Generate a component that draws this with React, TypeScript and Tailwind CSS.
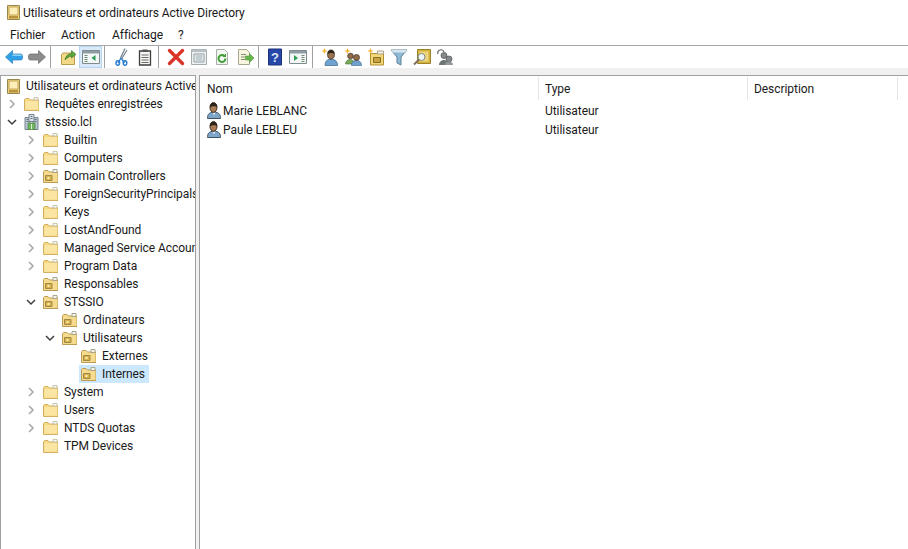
import type { ReactNode } from "react";

function Folder() {
  return (
    <svg width="15" height="14" viewBox="0 0 15 14" className="shrink-0">
      <path d="M.5 13.500V2.500l1-1h3.500l1.500 1.500h8.500v10.500z" fill="#f8d981" stroke="#d2b063" />
      <path d="M10 .5h4v2.500h-4z" fill="#fbfaf2" stroke="#c8c3ad" />
      <path d="M1.500 4h12.500v8.500H1.500z" fill="#fbe5a3" />
    </svg>
  );
}

function OuFolder() {
  return (
    <svg width="15" height="14" viewBox="0 0 15 14" className="shrink-0">
      <path d="M.5 13.500V2.500l1-1h3.500l1.500 1.500h8.500v10.500z" fill="#f6db8e" stroke="#bb9c52" />
      <path d="M10 .5h4v3h-4z" fill="#f7f5ea" stroke="#a9a48f" />
      <path d="M2.500 6.500h6.500v5H2.500z" fill="#d8b04a" stroke="#a08a45" />
      <path d="M4.500 8h2v2h-2z" fill="#fff0b8" />
    </svg>
  );
}

function Domain() {
  return (
    <svg width="15" height="16" viewBox="0 0 15 16" className="shrink-0">
      <path d="M1 3.500h5v12H1z" fill="#b9c6d0" stroke="#75838e" />
      <path d="M9 3.500h5v12H9z" fill="#b9c6d0" stroke="#75838e" />
      <path d="M5 .5h5v7H5z" fill="#d9e2e8" stroke="#75838e" />
      <path d="M2.500 5.500h2M2.500 7.500h2M10.500 5.500h2M10.500 7.500h2M6.500 2.500h2M6.500 4.500h2" stroke="#5d7180" />
      <path d="M4 9h7v6.500H4z" fill="#6fb35f" stroke="#4f8144" strokeWidth=".7" />
      <path d="M7.500 10v5" stroke="#d8efcf" />
    </svg>
  );
}

function RootIcon() {
  return (
    <svg width="13" height="15" viewBox="0 0 13 15" className="shrink-0">
      <path d="M.5.5h12v14H.5z" fill="#f0d27e" stroke="#98864f" />
      <path d="M2 2h9v8H2z" fill="#fbeeb9" stroke="#c5a75a" />
      <path d="M2 11h9v2.500H2z" fill="#b8933c" />
    </svg>
  );
}

function UserIcon() {
  return (
    <svg width="14" height="17" viewBox="0 0 14 17" className="shrink-0">
      <path d="M.5 16.500c0-3 .5-6 6.500-6.500 6 .5 6.500 3.500 6.500 6.500z" fill="#7fa6c9" stroke="#3f5266" />
      <path d="M5.500 10.500l1.500 3 1.500-3z" fill="#dfe9f1" />
      <ellipse cx="6.500" cy="5.500" rx="3.500" ry="4.800" fill="#a97c55" stroke="#3d2d1e" />
      <path d="M3 5.500C2.500 2 4.500.5 6.500.5S10.500 2 10 5.500C9 3.800 5 3.800 3 5.500z" fill="#2e241b" />
    </svg>
  );
}

function Chevron({ open }: { open?: boolean }) {
  return open ? (
    <svg width="10" height="7" viewBox="0 0 10 7">
      <path d="M1 1l4 4 4-4" fill="none" stroke="#3f3f3f" strokeWidth="1.500" />
    </svg>
  ) : (
    <svg width="7" height="10" viewBox="0 0 7 10">
      <path d="M1 1l4 4-4 4" fill="none" stroke="#a6a6a6" strokeWidth="1.500" />
    </svg>
  );
}

type TreeRow = {
  label: string;
  depth: number;
  icon: ReactNode;
  arrow?: "open" | "closed";
  selected?: boolean;
};

const rows: TreeRow[] = [
  { label: "Requêtes enregistrées", depth: 0, icon: <Folder />, arrow: "closed" },
  { label: "stssio.lcl", depth: 0, icon: <Domain />, arrow: "open" },
  { label: "Builtin", depth: 1, icon: <Folder />, arrow: "closed" },
  { label: "Computers", depth: 1, icon: <Folder />, arrow: "closed" },
  { label: "Domain Controllers", depth: 1, icon: <OuFolder />, arrow: "closed" },
  { label: "ForeignSecurityPrincipals", depth: 1, icon: <Folder />, arrow: "closed" },
  { label: "Keys", depth: 1, icon: <Folder />, arrow: "closed" },
  { label: "LostAndFound", depth: 1, icon: <Folder />, arrow: "closed" },
  { label: "Managed Service Accounts", depth: 1, icon: <Folder />, arrow: "closed" },
  { label: "Program Data", depth: 1, icon: <Folder />, arrow: "closed" },
  { label: "Responsables", depth: 1, icon: <OuFolder /> },
  { label: "STSSIO", depth: 1, icon: <OuFolder />, arrow: "open" },
  { label: "Ordinateurs", depth: 2, icon: <OuFolder /> },
  { label: "Utilisateurs", depth: 2, icon: <OuFolder />, arrow: "open" },
  { label: "Externes", depth: 3, icon: <OuFolder /> },
  { label: "Internes", depth: 3, icon: <OuFolder />, selected: true },
  { label: "System", depth: 1, icon: <Folder />, arrow: "closed" },
  { label: "Users", depth: 1, icon: <Folder />, arrow: "closed" },
  { label: "NTDS Quotas", depth: 1, icon: <Folder />, arrow: "closed" },
  { label: "TPM Devices", depth: 1, icon: <Folder /> },
];

const depthPad = ["pl-[5px]", "pl-[24px]", "pl-[43px]", "pl-[62px]"];

function ToolBtn({ children, active }: { children: ReactNode; active?: boolean }) {
  return (
    <div
      className={
        "flex h-[22px] w-[23px] items-center justify-center border " +
        (active ? "border-[#b5d7f3] bg-[#d8eafa]" : "border-transparent")
      }
    >
      {children}
    </div>
  );
}

function Sep({ className }: { className: string }) {
  return (
    <div className={"flex h-[22px] " + className}>
      <div className="h-full w-px bg-[#a0a0a0]" />
    </div>
  );
}

function Glyph({ children }: { children: ReactNode }) {
  return (
    <svg width="18" height="18" viewBox="0 0 18 18">
      {children}
    </svg>
  );
}

const star = "M3.500 0l.9 2.200 2.300.8-2.300.8-.9 2.200-.9-2.200L.3 3l2.300-.8z";

function Toolbar() {
  return (
    <div className="flex h-[22px] items-center pl-[2px]">
      <ToolBtn>
        <Glyph>
          <path d="M.5 9l7-6.500V6h8a2 2 0 0 1 2 2v2a2 2 0 0 1-2 2h-8v3.500z" fill="#2f9fe6" stroke="#2a7fc0" strokeWidth=".7" />
          <path d="M7.500 6.500h8a1.500 1.500 0 0 1 1.500 1.500H7.500z" fill="#8fd0f5" />
        </Glyph>
      </ToolBtn>
      <ToolBtn>
        <Glyph>
          <path d="M17.500 9l-7-6.500V6h-8a2 2 0 0 0-2 2v2a2 2 0 0 0 2 2h8v3.500z" fill="#8c8c8c" stroke="#6c6c6c" strokeWidth=".7" />
        </Glyph>
      </ToolBtn>
      <Sep className="w-2 pl-[2px]" />
      <ToolBtn>
        <Glyph>
          <path d="M2.500 16.500V6.500l1.500-1.500h11.500v11.500z" fill="#f2d987" stroke="#bb9c4c" />
          <path d="M6 12c.5-4 3-6 6.500-6.500V2.500L17 6.500l-4.500 3.500V8C10 8.500 8 10 6 12z" fill="#5aa83e" stroke="#387026" strokeWidth=".6" />
        </Glyph>
      </ToolBtn>
      <ToolBtn active>
        <Glyph>
          <path d="M.5 2.500h17v13H.5z" fill="#f4f7f8" stroke="#7f8c8d" />
          <path d="M1 3h16v2.500H1z" fill="#8f9ca3" />
          <path d="M2.500 7.500h3M2.500 9.500h3M2.500 11.500h3M2.500 13.500h3" stroke="#6f8a6f" />
          <path d="M13.500 7v6l-4-3z" fill="#2f9e4f" />
        </Glyph>
      </ToolBtn>
      <Sep className="w-2 pl-[2px]" />
      <ToolBtn>
        <Glyph>
          <path d="M12 .5L7.500 10M14 2L8.500 11" stroke="#7a8794" strokeWidth="1.300" fill="none" />
          <path d="M8 10L5 15M8.500 10.500L11.500 15" stroke="#2b7fd0" strokeWidth="1.400" fill="none" />
          <ellipse cx="4.800" cy="15" rx="1.800" ry="2.300" fill="none" stroke="#2b7fd0" strokeWidth="1.500" />
          <ellipse cx="12" cy="15" rx="1.800" ry="2.300" fill="none" stroke="#2b7fd0" strokeWidth="1.500" />
        </Glyph>
      </ToolBtn>
      <ToolBtn>
        <Glyph>
          <path d="M3.500 3h11v14h-11z" fill="#f6f6f2" stroke="#3d3d3d" strokeWidth="1.300" />
          <path d="M6.500 1.500h5V4h-5z" fill="#555" />
          <path d="M5.500 7h7M5.500 9.500h7M5.500 12h7M5.500 14.500h7" stroke="#6b6b6b" />
        </Glyph>
      </ToolBtn>
      <Sep className="w-2 pl-[2px]" />
      <ToolBtn>
        <Glyph>
          <path d="M2.500 2.500l13 13M15.500 2.500l-13 13" stroke="#d9352b" strokeWidth="3.400" strokeLinecap="round" />
        </Glyph>
      </ToolBtn>
      <ToolBtn>
        <Glyph>
          <path d="M1.500 1.500h15v15h-15z" fill="#eef1f1" stroke="#a4acac" />
          <path d="M1.500 1.500h15v2.500h-15z" fill="#b9c2c4" />
          <path d="M4 6h10v8H4z" fill="#fbfbfb" stroke="#8b9aa0" />
          <path d="M5.500 8h7M5.500 10h7M5.500 12h7" stroke="#8ba0aa" />
        </Glyph>
      </ToolBtn>
      <ToolBtn>
        <Glyph>
          <path d="M3.500 1.500h8l3 3v12h-11z" fill="#f4f7f2" stroke="#a8aea8" />
          <path d="M12.500 10.500a3.500 3.500 0 1 1-1-2.500" fill="none" stroke="#3f9e36" strokeWidth="2" />
          <path d="M13 5.500V9H9.500z" fill="#3f9e36" />
        </Glyph>
      </ToolBtn>
      <ToolBtn>
        <Glyph>
          <path d="M2.500 1.500h8l3 3v12h-11z" fill="#f7f5df" stroke="#a8a88e" />
          <path d="M5 6.500h5M5 9h4M5 11.500h4" stroke="#8c8c6c" />
          <path d="M9.500 8h4V5.500L18 10l-4.500 4.500V12h-4z" fill="#67b64a" stroke="#458a30" strokeWidth=".5" />
        </Glyph>
      </ToolBtn>
      <Sep className="w-[7px] pl-[2px]" />
      <ToolBtn>
        <Glyph>
          <path d="M2.500 1h13v16h-13z" fill="#2747a8" stroke="#1c327a" />
          <text x="9" y="14" textAnchor="middle" fontSize="13" fontWeight="700" fill="#dfe6fa" fontFamily="Liberation Sans, sans-serif">?</text>
        </Glyph>
      </ToolBtn>
      <ToolBtn>
        <Glyph>
          <path d="M.5 2.500h17v13H.5z" fill="#f4f7f8" stroke="#7f8c8d" />
          <path d="M1 3h16v2.500H1z" fill="#8f9ca3" />
          <path d="M12.500 7.500h3M12.500 9.500h3M12.500 11.500h3M12.500 13.500h3" stroke="#6f8a6f" />
          <path d="M5 7v6l4-3z" fill="#2f9e4f" />
        </Glyph>
      </ToolBtn>
      <Sep className="w-[9px] pl-[3px]" />
      <ToolBtn>
        <Glyph>
          <path d="M4 17.500c0-4.500 2-6 6-6.500 4 .5 6.500 2 6.500 6.500z" fill="#6ea3cf" stroke="#3b6488" strokeWidth=".7" />
          <ellipse cx="10" cy="6.500" rx="3.400" ry="4.500" fill="#9c7350" stroke="#3d2d1e" strokeWidth=".8" />
          <path d="M6.800 6C6.500 3 8 2 10 2s3.500 1 3.200 4C12 4.800 8.500 4.800 6.800 6z" fill="#2e241b" />
          <path d={star} fill="#f5b52e" />
        </Glyph>
      </ToolBtn>
      <ToolBtn>
        <Glyph>
          <path d="M1.500 16c0-3 2-4.500 4.500-4.500S10.500 13 10.500 16z" fill="#79a85a" stroke="#4e7236" strokeWidth=".6" />
          <path d="M7.500 17.500c0-3.500 2-5 5-5s5 1.500 5 5z" fill="#6ea3cf" stroke="#3b6488" strokeWidth=".6" />
          <circle cx="6.500" cy="8" r="2.800" fill="#8f6b4a" stroke="#3d2d1e" strokeWidth=".7" />
          <circle cx="12.500" cy="9.500" r="3" fill="#8f6b4a" stroke="#3d2d1e" strokeWidth=".7" />
          <path d={star} fill="#f5b52e" />
        </Glyph>
      </ToolBtn>
      <ToolBtn>
        <Glyph>
          <path d="M3.500 17V5.500h13V17z" fill="#f3d675" stroke="#b08f35" />
          <path d="M10.500 3h6v3h-6z" fill="#f4f1e4" stroke="#a9a48f" />
          <path d="M6.500 9.500h7v5h-7z" fill="#c9a13f" stroke="#866e2d" />
          <path d={star} fill="#f5b52e" />
        </Glyph>
      </ToolBtn>
      <ToolBtn>
        <Glyph>
          <path d="M1 2h16l-6 7v8l-4-2V9z" fill="#8fb9d4" stroke="#5f8196" />
          <path d="M1 2h16l-2 2.500H3z" fill="#d5e6f0" />
        </Glyph>
      </ToolBtn>
      <ToolBtn>
        <Glyph>
          <path d="M4.500 1.500h13v14h-13z" fill="#d4b23e" stroke="#9c8228" />
          <path d="M6.500 3.500h9v10h-9z" fill="#ecd67d" />
          <circle cx="8.500" cy="9" r="3.500" fill="#eef4f4" stroke="#7d8a8a" />
          <path d="M6 11.500L1 16.500" stroke="#7d7060" strokeWidth="2" />
        </Glyph>
      </ToolBtn>
      <ToolBtn>
        <Glyph>
          <path d="M2 6a3 3 0 0 1 6-2" fill="none" stroke="#666" strokeWidth="1.200" />
          <circle cx="8" cy="7.500" r="3" fill="#85898a" stroke="#505354" strokeWidth=".7" />
          <circle cx="13" cy="11" r="3" fill="#85898a" stroke="#505354" strokeWidth=".7" />
          <path d="M3 17c0-3 2.500-5 5-5s4 1.500 4 5z" fill="#6f7475" />
          <path d="M9 17c0-2.500 2-3.500 4-3.500s4 1 4 3.500z" fill="#93989a" />
        </Glyph>
      </ToolBtn>
    </div>
  );
}

function TreeLine({ row }: { row: TreeRow }) {
  return (
    <div className={"flex h-[18px] items-center " + depthPad[row.depth]}>
      <div className="flex w-[12px] shrink-0 items-center justify-center">
        {row.arrow && <Chevron open={row.arrow === "open"} />}
      </div>
      <div className={"ml-[4px] flex h-[18px] shrink-0 items-center pl-[2px] pr-[4px] " + (row.selected ? "bg-[#cce8ff]" : "")}>
        <div className="flex w-[15px] shrink-0 items-center justify-center">{row.icon}</div>
        <span className="ml-[6px] whitespace-nowrap">{row.label}</span>
      </div>
    </div>
  );
}

export default function App() {
  return (
    <div className="flex h-[549px] w-[908px] flex-col overflow-hidden bg-white font-['Roboto',sans-serif] text-[12px] leading-[18px] tracking-[-0.06px] text-[#1a1a1a]">
      <div className="flex h-[25px] items-center gap-[3px] pl-[7px]">
        <RootIcon />
        <span>Utilisateurs et ordinateurs Active Directory</span>
      </div>
      <div className="flex h-[20px] items-center pl-[10px]">
        <span className="w-[51px]">Fichier</span>
        <span className="w-[51px]">Action</span>
        <span className="w-[66px]">Affichage</span>
        <span>?</span>
      </div>
      <div className="h-px bg-[#a8a8a8]" />
      <Toolbar />
      <div className="h-[7px] bg-[#f0f0f0]" />
      <div className="flex min-h-0 flex-1 bg-[#f0f0f0]">
        <div className="w-[196px] shrink-0 overflow-hidden border-t border-r border-l border-[#a0a0a0] bg-white pt-px">
          <div className="flex h-[18px] items-center gap-[6px] pl-[6px]">
            <RootIcon />
            <span className="whitespace-nowrap">Utilisateurs et ordinateurs Active Directory</span>
          </div>
          {rows.map((r) => (
            <TreeLine key={r.label} row={r} />
          ))}
        </div>
        <div className="w-[3px] shrink-0" />
        <div className="min-w-0 flex-1 border-t border-l border-[#a0a0a0] bg-white">
          <div className="flex h-[25px] pt-px">
            <div className="flex h-[23px] w-[339px] items-center border-r border-[#e5e5e5] pl-[7px]">Nom</div>
            <div className="flex h-[23px] w-[209px] items-center border-r border-[#e5e5e5] pl-[6px]">Type</div>
            <div className="flex h-[23px] w-[150px] items-center border-r border-[#e5e5e5] pl-[6px]">Description</div>
          </div>
          {["Marie LEBLANC", "Paule LEBLEU"].map((name) => (
            <div key={name} className="flex h-[19px] items-center">
              <div className="flex w-[339px] items-center gap-[2px] pl-[7px]">
                <UserIcon />
                <span>{name}</span>
              </div>
              <div className="pl-[6px]">Utilisateur</div>
            </div>
          ))}
        </div>
      </div>
    </div>
  );
}
